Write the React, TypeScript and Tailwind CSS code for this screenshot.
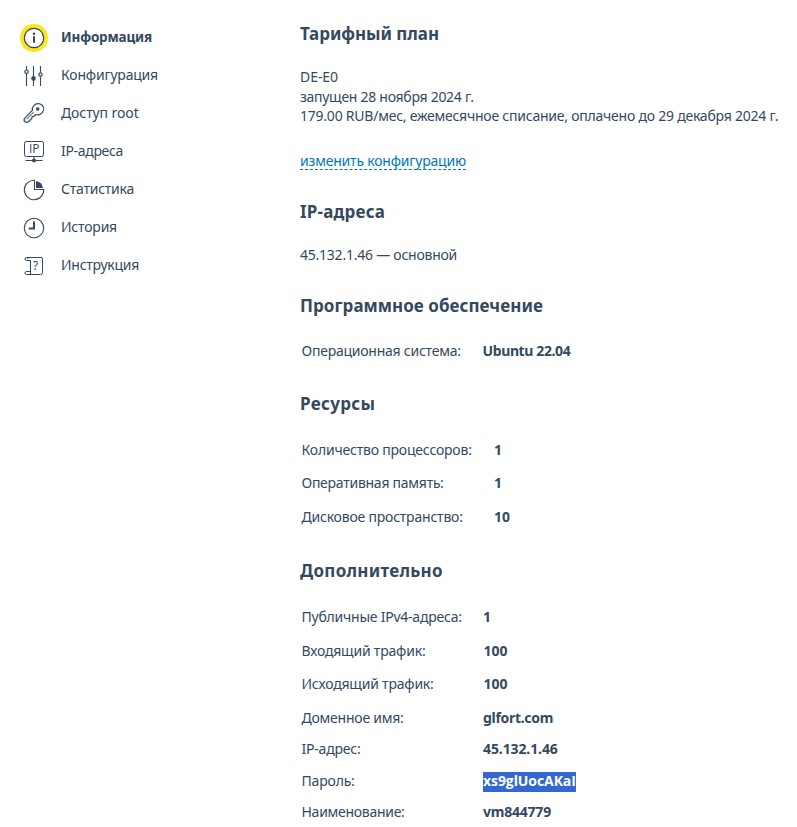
import type { ReactNode } from "react";

const icon = "h-7 w-7 shrink-0 overflow-visible fill-none stroke-[#34495e]";

const InfoIcon = () => (
  <svg viewBox="0 0 28 28" className={icon}>
    <circle cx="14" cy="14" r="14" fill="#fbe61c" stroke="none" />
    <circle cx="14" cy="14" r="9.7" fill="#fff" strokeWidth="1.2" />
    <path d="M14 12.3v6.4" strokeWidth="2" />
    <circle cx="14" cy="9.7" r="1.2" fill="#34495e" stroke="none" />
  </svg>
);

const SlidersIcon = () => (
  <svg viewBox="0 0 28 28" className={icon}>
    <path d="M6.5 4v4M6.5 11.5V24M13.5 4v20M20.5 4v6.5M20.5 14.5V24" strokeWidth="1.1" />
    <circle cx="6.5" cy="9.7" r="1.7" strokeWidth="1.2" />
    <circle cx="13.5" cy="16.4" r="2.3" fill="#34495e" stroke="none" />
    <circle cx="20.5" cy="12.5" r="1.7" strokeWidth="1.2" />
  </svg>
);

const KeyIcon = () => (
  <svg viewBox="0 0 28 28" className={icon} strokeLinejoin="round">
    <path strokeWidth="1.2" d="M12.4 10.4 5 17.8c-1.100 1.200-1.100 2.800-.1 3.800s2.700 1 3.800-.1l3.100-3.200.3-1.600 1.700-.3 1.900-1.900c2.700.7 5.300-.2 6.800-2.200 1.700-2.400 1.400-5.500-.6-7.300-2.300-2-5.800-1.900-7.900.3-1.400 1.400-1.900 3.200-1.600 5.100z" />
    <path d="m6.500 19.300 7.200-7.200" strokeWidth="1.100" strokeOpacity="0.75" />
    <circle cx="17.700" cy="9" r="1.800" fill="#34495e" stroke="none" />
  </svg>
);

const IpIcon = () => (
  <svg viewBox="0 0 28 28" className={icon}>
    <rect x="4.500" y="3.500" width="19" height="15" rx="1.800" />
    <path d="M14 18.500v3M5.500 22.500h17" />
    <circle cx="14" cy="22.400" r="2" fill="#34495e" stroke="none" />
    <text x="14.200" y="15.200" textAnchor="middle" fill="#34495e" stroke="none" className="font-['Open_Sans',sans-serif] text-[12px]">IP</text>
  </svg>
);

const PieIcon = () => (
  <svg viewBox="0 0 28 28" className={icon}>
    <path d="M14.500 4.300A9.700 9.700 0 1 0 23.700 13.500H14.500z" strokeWidth="1.100" />
    <path d="M16 5.300v6.700h6.900a7 7 0 0 0-6.900-6.700z" fill="#34495e" stroke="none" />
  </svg>
);

const ClockIcon = () => (
  <svg viewBox="0 0 28 28" className={icon}>
    <circle cx="14" cy="14" r="9.700" strokeWidth="1.100" />
    <path d="M14 7.500v7H8.800" strokeWidth="2" />
  </svg>
);

const ManualIcon = () => (
  <svg viewBox="0 0 28 28" className={icon}>
    <path d="M10.500 8.500v14M7 5.500h14a1.500 1.500 0 0 1 1.500 1.500v13.500a2 2 0 0 1-2 2H7.500M10.500 8.500h-4a1.500 1.500 0 1 1 1.500-1.500M10.500 19.500h-4a1.500 1.500 0 0 0 0 3h3" />
    <text x="15.600" y="18" textAnchor="middle" fill="#34495e" stroke="none" className="text-[12px]">?</text>
  </svg>
);

const menu: { label: string; style: string; Icon: () => ReactNode }[] = [
  { label: "Информация", style: "text-[13.5px] font-bold tracking-[-0.19px]", Icon: InfoIcon },
  { label: "Конфигурация", style: "tracking-[-0.19px]", Icon: SlidersIcon },
  { label: "Доступ root", style: "tracking-[-0.09px]", Icon: KeyIcon },
  { label: "IP-адреса", style: "tracking-[-0.32px]", Icon: IpIcon },
  { label: "Статистика", style: "tracking-[-0.23px]", Icon: PieIcon },
  { label: "История", style: "tracking-[-0.21px]", Icon: ClockIcon },
  { label: "Инструкция", style: "tracking-[-0.25px]", Icon: ManualIcon },
];

function Heading({ className, children }: { className: string; children: ReactNode }) {
  return <h2 className={`text-[17px] leading-6 font-bold ${className}`}>{children}</h2>;
}

function Field({ label, value, row, labelStyle, valueStyle = "" }: { label: string; value: string; row: string; labelStyle: string; valueStyle?: string }) {
  return (
    <div className={`flex items-start pl-[1.5px] ${row}`}>
      <dt className={`shrink-0 ${labelStyle}`}>{label}</dt>
      <dd className={`font-bold ${valueStyle}`}>{value}</dd>
    </div>
  );
}

export default function App() {
  return (
    <div className="flex h-[827px] w-[797px] overflow-hidden bg-white font-['Noto_Sans',sans-serif] text-sm leading-5 whitespace-nowrap text-[#34495e]">
      <nav className="w-[300px] shrink-0 pt-[19px] pl-5">
        <ul>
          {menu.map(({ label, style, Icon }) => (
            <li key={label} className="flex h-[38px] items-center gap-[13px]">
              <Icon />
              <span className={`pb-0.5 ${style}`}>{label}</span>
            </li>
          ))}
        </ul>
      </nav>
      <main className="flex-1 pt-[22px]">
        <Heading className="tracking-[-0.06px]">Тарифный план</Heading>
        <div className="mt-[21px] leading-[19.6px]">
          <p className="tracking-[-0.06px]">DE-E0</p>
          <p className="tracking-[-0.28px]">запущен 28 ноября 2024 г.</p>
          <p className="tracking-[-0.23px]">179.00 RUB/мес, ежемесячное списание, оплачено до 29 декабря 2024 г.</p>
        </div>
        <div className="mt-[25px] flex h-5">
          <a className="h-[19px] border-b border-dashed border-[#0079b8] tracking-[-0.2px] text-[#0079b8]">изменить конфигурацию</a>
        </div>

        <Heading className="mt-[29px] tracking-[0.2px]">IP-адреса</Heading>
        <p className="mt-[21px] tracking-[-0.235px]">45.132.1.46 — основной</p>

        <Heading className="mt-[29px] tracking-[0.04px]">Программное обеспечение</Heading>
        <dl className="mt-[23px]">
          <Field label="Операционная система:" value="Ubuntu 22.04" row="h-5" labelStyle="w-[181px] tracking-[-0.24px]" valueStyle="tracking-[-0.38px]" />
        </dl>

        <Heading className="mt-[31px] tracking-[0.3px]">Ресурсы</Heading>
        <dl className="mt-6">
          <Field label="Количество процессоров:" value="1" row="h-[33px]" labelStyle="w-[192.5px] tracking-[-0.2px]" />
          <Field label="Оперативная память:" value="1" row="h-[34px]" labelStyle="w-[192.5px] tracking-[-0.26px]" />
          <Field label="Дисковое пространство:" value="10" row="h-5" labelStyle="w-[192.5px] tracking-[-0.21px]" />
        </dl>

        <Heading className="mt-8 tracking-[0.28px]">Дополнительно</Heading>
        <dl className="mt-6">
          <Field label="Публичные IPv4-адреса:" value="1" row="h-[34px]" labelStyle="w-[181.5px] tracking-[-0.23px]" />
          <Field label="Входящий трафик:" value="100" row="h-[33px]" labelStyle="w-[182px] tracking-[-0.2px]" />
          <Field label="Исходящий трафик:" value="100" row="h-[34px]" labelStyle="w-[182px] tracking-[-0.21px]" />
          <Field label="Доменное имя:" value="glfort.com" row="h-[31px]" labelStyle="w-[181.5px] tracking-[-0.23px]" valueStyle="tracking-[-0.3px]" />
          <Field label="IP-адрес:" value="45.132.1.46" row="h-8" labelStyle="w-[181.5px] tracking-[-0.2px]" valueStyle="tracking-[-0.1px]" />
          <Field label="Пароль:" value="xs9glUocAKaI" row="h-[31px]" labelStyle="w-[181.5px] tracking-[-0.18px]" valueStyle="mt-px w-[93px] bg-[#3367d1] font-['Open_Sans',sans-serif] leading-[18px] h-5 text-white tracking-[-0.08px]" />
          <Field label="Наименование:" value="vm844779" row="h-5" labelStyle="w-[181.5px] tracking-[-0.28px]" valueStyle="tracking-[-0.22px]" />
        </dl>
      </main>
    </div>
  );
}
